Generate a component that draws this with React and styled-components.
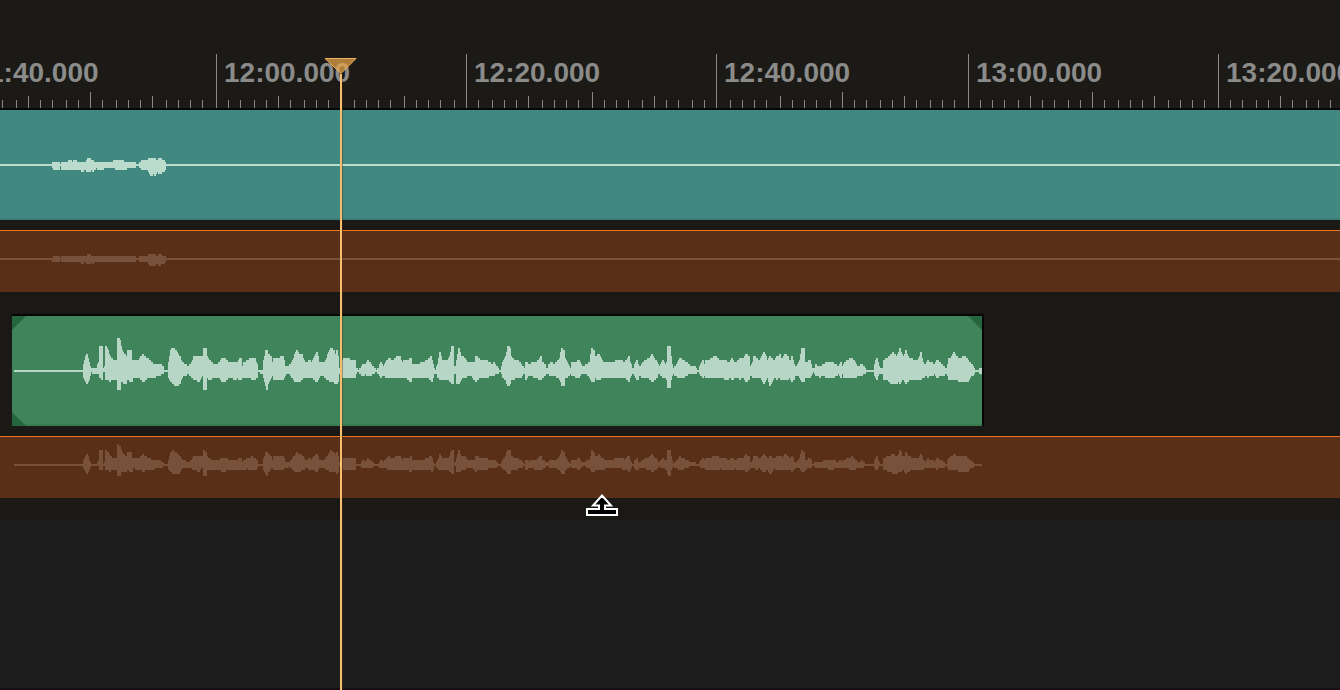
import React, { useEffect, useState } from "react";
import styled, { createGlobalStyle } from "styled-components";

const GlobalStyle = createGlobalStyle`
  html, body { margin: 0; padding: 0; background: #1d1d1d; }
  * { box-sizing: border-box; }
`;

/* ---------- timeline geometry ---------- */

const TICKS_PER_LABEL = 20;
const TICK_SPACING = 12.525;
const TIMELINE_ORIGIN = 216.5;
const FIRST_LABEL_SECONDS = 11 * 60 + 40;
const tickX = (n) => 2 * Math.floor((TIMELINE_ORIGIN + n * TICK_SPACING) / 2);

const pad = (n) => String(n).padStart(2, "0");
const timecode = (seconds) => `${pad(Math.floor(seconds / 60))}:${pad(seconds % 60)}.000`;

/* ---------- peak data: x, height above centre, height below ---------- */

const INTRO_PEAKS = `52 1 1,54 3 5,59 3 5,60 1 1,61 1 1,62 3 5,68 3 4,70 5 5,72 3 5,75 5 5,77 3 5,81 3 5,82 3 7,84 3 5,
86 3 5,87 5 7,88 7 7,90 7 7,91 4 5,92 5 5,93 5 7,94 3 5,96 3 3,100 3 5,103 3 4,113 3 3,115 5 3,117 5 5,119 3 5,121 5 5,
125 3 5,127 3 3,135 3 3,136 1 1,139 1 1,140 3 3,143 5 5,148 5 5,150 7 9,152 7 11,153 7 7,155 7 11,157 3 5,159 7 9,
160 7 9,163 5 7,165 3 5,166 1 1`;

const VOICE_PEAKS = `83 3 3,85 11 9,87 17 13,89 9 8,91 1 1,93 3 2,97 3 3,99 9 2,100 25 7,102 25 8,103 1 1,105 5 1,106 25 9,108 20 9,
110 14 10,114 11 8,117 10 8,118 33 19,120 31 19,121 24 10,124 17 12,126 15 12,127 8 8,128 21 9,131 20 11,132 11 10,
133 3 3,134 11 6,138 10 7,141 14 8,143 17 11,146 13 8,150 11 7,153 7 7,160 7 4,163 5 3,164 1 1,168 1 1,169 8 7,
171 21 10,173 23 13,177 19 15,180 14 12,182 9 6,186 6 4,188 4 3,191 7 5,194 14 8,198 14 10,199 15 10,202 15 4,
203 5 3,204 23 19,206 22 18,207 14 6,209 11 9,213 7 7,217 7 7,220 9 7,222 12 10,225 12 11,228 9 7,233 9 7,235 9 9,
238 8 7,240 12 9,241 12 9,242 2 6,244 8 7,248 11 6,252 13 8,255 12 8,257 7 6,258 1 1,263 1 3,264 11 7,266 20 15,
267 21 19,268 17 12,271 15 6,272 6 3,274 13 8,278 13 8,281 14 9,283 15 8,285 5 4,290 6 3,292 9 6,295 16 10,
297 21 11,299 17 11,302 16 8,305 8 6,308 9 6,310 11 7,312 7 7,314 13 8,317 19 11,319 9 6,323 8 5,325 9 6,328 16 9,
331 23 11,334 21 11,335 15 12,337 20 13,338 14 10,339 1 1,342 9 5,344 12 7,349 12 7,355 11 7,356 3 2,358 1 1,
361 3 3,363 7 5,366 6 3,368 11 5,370 8 5,374 3 2,376 1 1,379 3 3,381 9 6,384 4 3,386 9 6,389 13 7,393 10 7,
397 15 7,400 14 7,402 9 7,405 11 7,408 11 8,411 13 11,412 7 7,418 7 7,424 9 7,428 11 7,431 15 9,432 10 11,434 2 3,
436 1 1,438 7 6,440 18 9,442 11 8,448 11 8,450 14 10,452 25 13,453 25 13,454 5 3,456 5 3,457 11 12,459 23 12,
461 15 8,465 13 7,467 9 5,473 9 6,474 4 8,476 15 10,480 11 7,487 10 7,489 9 5,492 6 5,494 9 4,497 4 3,499 1 1,
501 1 1,503 8 6,506 14 9,508 25 15,510 23 13,511 15 9,514 11 8,518 10 6,521 7 6,523 4 3,525 1 1,526 8 8,527 9 7,
529 5 4,532 8 5,536 9 7,539 11 8,541 15 8,542 9 7,545 6 5,547 1 1,549 6 3,551 9 5,554 6 4,557 9 6,560 13 8,
562 23 14,564 20 15,565 13 7,567 8 6,569 4 4,571 1 1,572 8 5,576 8 6,579 11 7,580 8 4,583 3 2,586 6 3,590 9 6,
592 23 11,594 20 10,595 13 7,599 17 9,602 10 7,606 9 6,612 9 6,620 11 6,625 9 7,627 11 8,629 15 11,630 9 7,
632 3 3,634 1 1,635 7 5,637 11 9,638 6 8,640 3 3,642 7 6,645 11 6,650 13 8,652 17 11,654 12 9,657 9 6,659 3 1,
661 7 5,663 11 6,665 6 6,667 8 8,668 25 16,670 25 17,671 14 9,673 1 1,675 4 4,678 9 6,680 13 7,682 11 7,686 9 5,
689 6 3,695 5 3,697 1 1,699 1 1,701 7 4,703 10 6,704 4 4,706 10 7,711 12 7,715 15 7,718 13 7,720 10 6,725 11 8,
727 9 9,730 9 6,732 12 9,735 8 6,740 12 8,744 12 6,746 17 11,749 14 8,750 4 4,751 3 3,753 9 6,754 15 6,757 13 7,
759 8 5,761 12 7,764 18 12,766 14 9,768 9 6,770 15 15,772 12 11,774 9 5,
777 14 8,780 16 7,782 10 9,785 17 8,788 15 9,790 7 6,792 14 10,794 6 8,796 3 3,798 7 5,800 11 6,802 23 11,
804 22 10,805 9 7,807 8 6,810 11 6,812 3 2,814 1 1,816 6 4,820 4 6,823 6 3,826 8 6,832 9 7,836 6 5,839 4 3,
841 9 6,842 1 1,844 7 6,848 11 6,852 13 7,855 9 7,858 4 4,862 7 4,864 4 3,866 1 1,874 1 1,875 7 5,877 13 8,
879 5 3,881 1 1,883 3 3,884 10 8,887 13 9,891 16 12,893 18 13,897 14 13,899 18 9,900 23 12,902 16 9,904 12 9,
906 20 13,908 14 10,912 12 9,916 10 8,919 12 8,921 18 8,923 9 7,925 4 5,928 10 6,932 8 5,935 5 3,937 11 7,
940 8 4,944 5 5,945 1 1,947 3 3,949 12 8,952 14 9,954 18 9,957 14 9,961 13 11,965 15 11,968 11 10,970 8 6,
973 5 4,975 1 1,979 1 1,980 3 3,982 3 3`;

const parsePeaks = (text) => text.split(",").map((point) => point.trim().split(/\s+/).map(Number));

const odd = (value) => Math.max(1, 2 * Math.round((value - 1) / 2) + 1);

// Interpolated [up, down] heights at every whole pixel of the recording.
function samplePeaks(points) {
  const last = points[points.length - 1][0];
  const samples = [];
  let i = 0;
  for (let x = points[0][0]; x <= last; x += 1) {
    while (i < points.length - 2 && points[i + 1][0] <= x) i += 1;
    const [x0, up0, down0] = points[i];
    const [x1, up1, down1] = points[i + 1];
    const t = (x - x0) / (x1 - x0);
    samples.push([up0 + (up1 - up0) * t, down0 + (down1 - down0) * t]);
  }
  return samples;
}

// Stepped outline; each bar takes the louder of its two edges.
function outline(points, shift, centre, gain) {
  const samples = samplePeaks(points);
  const first = points[0][0] - shift;
  let path = "";
  for (let i = 0; i < samples.length - 1; i += 1) {
    const up = odd(Math.max(samples[i][0], samples[i + 1][0]) * gain);
    const down = odd(Math.max(samples[i][1], samples[i + 1][1]) * gain);
    path += `M${first + i} ${centre - up}h1v${up + down}h-1z`;
  }
  return path;
}

const introPeaks = parsePeaks(INTRO_PEAKS);
const voicePeaks = parsePeaks(VOICE_PEAKS);

/* ---------- layout ---------- */

const Timeline = styled.main`
  position: relative;
  display: flex;
  flex-direction: column;
  min-height: 100vh;
  overflow: hidden;
  background: #1d1d1d;
  font-family: "Liberation Sans", Arial, sans-serif;
`;

const Ruler = styled.header`
  display: flex;
  overflow: hidden;
  padding-top: 54px;
  background: #1b1a17;
  border-bottom: 2px solid #050505;
`;

const RulerStrip = styled.div`
  display: flex;
  flex: none;
  margin-left: -34px;
`;

const RulerSection = styled.div`
  display: flex;
  flex: none;
  flex-direction: column;
  justify-content: space-between;
  height: 54px;
  border-left: 1px solid #888885;
`;

const TimeLabel = styled.span`
  padding: 3px 0 0 7px;
  color: #8b8b89;
  font-size: 28px;
  font-weight: 700;
  line-height: 32px;
  white-space: nowrap;
`;

const Ticks = styled.svg`
  display: block;
  width: 100%;
  height: 16px;
  fill: #888885;
  shape-rendering: crispEdges;
`;

const Tracks = styled.section`
  display: flex;
  flex-direction: column;
  gap: 22px;
  padding-bottom: 22px;
  background: #1a1916;
`;

const Track = styled.article`
  display: flex;
  flex-direction: column;
  gap: 10px;
`;

const Clip = styled.div`
  position: relative;
  height: ${(p) => (p.$trimmed ? 112 : 110)}px;
  width: ${(p) => (p.$trimmed ? "972px" : "auto")};
  margin-left: ${(p) => (p.$trimmed ? 12 : 0)}px;
  background: ${(p) => p.$color};
  border: 0 solid #050505;
  border-width: ${(p) => (p.$trimmed ? "2px 2px 0 0" : "0")};
  box-shadow: inset 0 -2px ${(p) => p.$edge};
`;

const SendLane = styled.div`
  height: 62px;
  background: #5a2f17;
  border-top: 1px solid #ee7420;
`;

const Wave = styled.svg`
  display: block;
  width: 100%;
  height: 100%;
  overflow: hidden;
  fill: ${(p) => p.$color};
  shape-rendering: crispEdges;
`;

const FadeHandle = styled.span`
  position: absolute;
  width: 14px;
  height: 14px;
  background: #27653f;
  ${(p) => (p.$bottom ? "bottom: 0;" : "top: 0;")}
  ${(p) => (p.$right ? "right: 0;" : "left: 0;")}
  clip-path: polygon(${(p) => p.$shape});
`;

const EmptyArea = styled.div`
  flex: 1;
  background: #1d1d1d;
  border-bottom: 2px solid #190f15;
`;

const Playhead = styled.div`
  position: absolute;
  top: 58px;
  bottom: 0;
  left: 324px;
  display: flex;
  flex-direction: column;
  align-items: center;
  width: 34px;
`;

const PlayheadFlag = styled.svg`
  display: block;
  flex: none;
  width: 34px;
  height: 16px;
`;

const PlayheadLine = styled.div`
  flex: 1;
  width: 2px;
  background: #f6bf70;
  box-shadow: 1px 0 #4b290a66;
`;

const DropPointer = styled.svg`
  position: absolute;
  top: 493px;
  left: 585px;
  width: 34px;
  height: 25px;
`;

/* ---------- parts ---------- */

function Waveform({ points, color, shift = 0, centre, gain = 1, from = 0, to }) {
  return (
    <Wave $color={color} aria-hidden="true">
      <rect x={from} y={centre - 1} width={to ? to - from : "100%"} height="2" />
      <path d={outline(points, shift, centre, gain)} />
    </Wave>
  );
}

function Section({ index }) {
  const base = (index - 1) * TICKS_PER_LABEL;
  const start = tickX(base);
  const ticks = [];
  for (let n = 1; n < TICKS_PER_LABEL; n += 1) {
    const height = n % 10 === 0 ? 16 : n % 5 === 0 ? 12 : 8;
    ticks.push(<rect key={n} x={tickX(base + n) - start - 1} y={16 - height} width="1" height={height} />);
  }
  return (
    <RulerSection style={{ width: tickX(base + TICKS_PER_LABEL) - start }}>
      <TimeLabel>{timecode(FIRST_LABEL_SECONDS + index * 20)}</TimeLabel>
      <Ticks aria-hidden="true">{ticks}</Ticks>
    </RulerSection>
  );
}

function useSectionCount() {
  const count = () => Math.ceil((window.innerWidth + 34) / (TICKS_PER_LABEL * TICK_SPACING));
  const [value, setValue] = useState(count);
  useEffect(() => {
    const update = () => setValue(count());
    window.addEventListener("resize", update);
    return () => window.removeEventListener("resize", update);
  }, []);
  return value;
}

export default function App() {
  const sections = useSectionCount();
  return (
    <>
      <GlobalStyle />
      <Timeline>
        <Ruler>
          <RulerStrip>
            {Array.from({ length: sections }, (_, index) => (
              <Section key={index} index={index} />
            ))}
          </RulerStrip>
        </Ruler>
        <Tracks>
          <Track>
            <Clip $color="#408880" $edge="#3a7e76">
              <Waveform points={introPeaks} color="#bbdccc" centre={55} />
            </Clip>
            <SendLane>
              <Waveform points={introPeaks} color="#775139" centre={28} gain={0.7} />
            </SendLane>
          </Track>
          <Track>
            <Clip $trimmed $color="#40845b" $edge="#387c50">
              <Waveform points={voicePeaks} color="#b7d6c5" shift={12} centre={55} from={2} />
              <FadeHandle $shape="0 0, 100% 0, 0 100%" />
              <FadeHandle $bottom $shape="0 0, 100% 100%, 0 100%" />
              <FadeHandle $right $shape="0 0, 100% 0, 100% 100%" />
            </Clip>
            <SendLane>
              <Waveform points={voicePeaks} color="#775139" centre={28} gain={0.62} from={14} to={982} />
            </SendLane>
          </Track>
        </Tracks>
        <EmptyArea />
        <Playhead>
          <PlayheadFlag viewBox="0 0 34 16" aria-hidden="true">
            <path d="M1 .5H32L17 15.5Z" fill="#e9a548" fillOpacity=".72" stroke="#efb35f" />
          </PlayheadFlag>
          <PlayheadLine />
        </Playhead>
        <DropPointer viewBox="0 0 34 25" aria-hidden="true">
          <path d="M17 2.5L26 12.5H20V16H32V22H2V16H14V12.5H8Z" fill="#000" stroke="#fff" strokeWidth="2" />
        </DropPointer>
      </Timeline>
    </>
  );
}
